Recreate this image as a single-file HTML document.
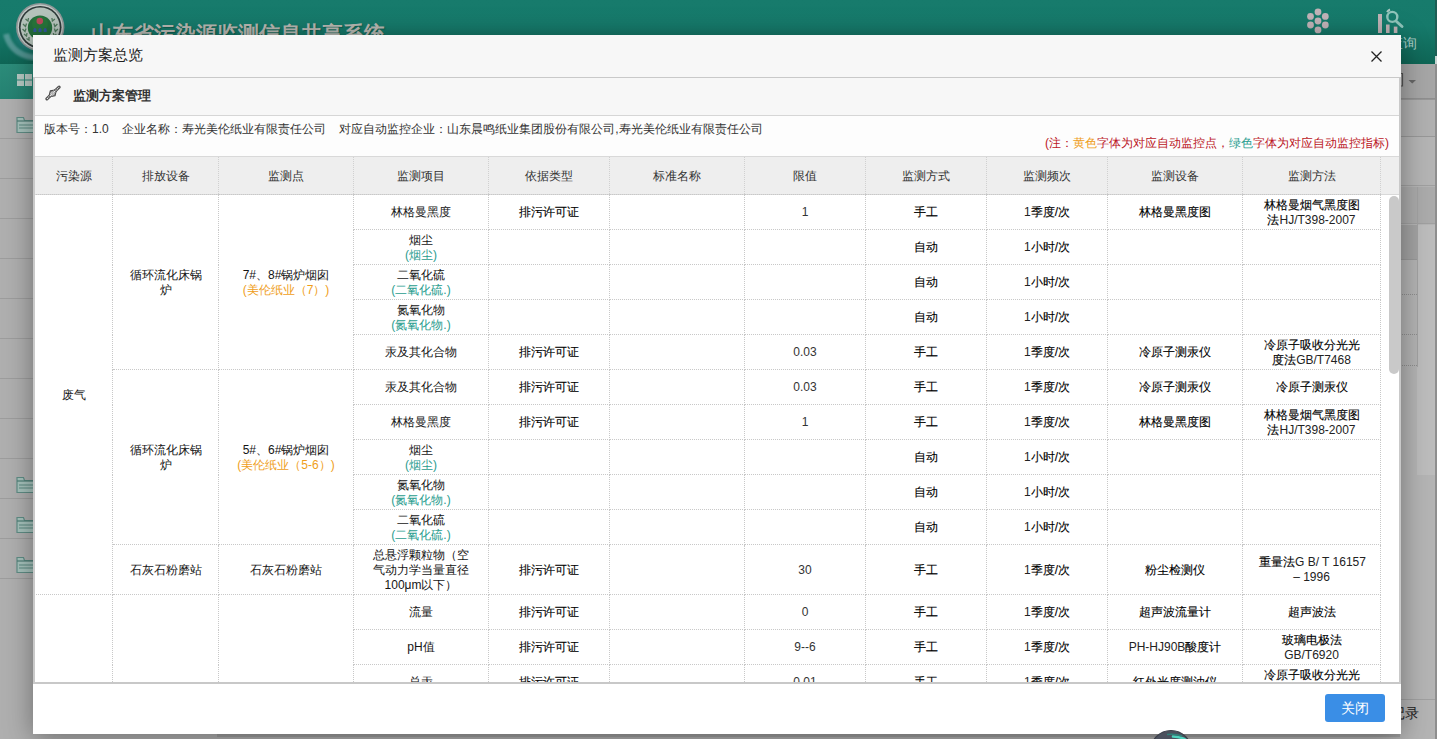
<!DOCTYPE html>
<html><head><meta charset="utf-8">
<style>
*{box-sizing:border-box;margin:0;padding:0}
html,body{width:1437px;height:739px;overflow:hidden}
body{position:relative;background:#afafaf;font-family:"Liberation Sans",sans-serif;font-size:12px;color:#222}
.abs{position:absolute}
/* background page */
#hdr{left:0;top:0;width:1437px;height:64px;background:linear-gradient(#177b6c 0%,#167a6b 40%,#0f6656 100%)}
#nav{left:0;top:64px;width:1437px;height:35px;background:#a6a6a6;border-bottom:1px solid #8f8f8f}
#navl{left:0;top:64px;width:40px;height:35px;background:linear-gradient(#2c8c7a,#258272)}
#htitle{left:91px;top:22px;font-size:21px;line-height:24px;font-weight:900;color:#b8b8b2;text-shadow:1px 1px 1px rgba(0,40,30,.35);white-space:nowrap}
#hq{left:1389px;top:35px;font-size:14px;line-height:16px;color:#a6cbc4;white-space:nowrap}
#side{left:0;top:99px;width:40px;height:640px;background:#afafaf}
.sl{position:absolute;left:0;width:40px;height:1px;background:#9d9d9d}
#rightbg{left:1400px;top:99px;width:37px;height:640px;background:#b4b4b4}
/* modal */
#modal{left:33px;top:35px;width:1368px;height:699px;background:#fff;box-shadow:0 4px 26px rgba(0,0,0,.38)}
#mtitle{left:0;top:0;width:1368px;height:43px;background:#f7f7f7;border-bottom:1px solid #c9c9c9}
#mtitle .t{position:absolute;left:20px;top:11px;font-size:15px;line-height:18px;color:#222}
#close{left:1338px;top:16px;width:11px;height:11px}
#mbody{left:0;top:43px;width:1368px;height:606px;border-left:2px solid #c9c9c9;border-right:2px solid #c9c9c9;border-bottom:2px solid #c8c8c8;overflow:hidden;background:#fff}
#ph{left:0;top:0;width:1364px;height:38px;background:#f7f7f7;border-bottom:1px solid #d6d6d6}
#ph .t{position:absolute;left:38px;top:10px;font-size:13px;font-weight:bold;line-height:16px;color:#333}
#ph svg{position:absolute;left:8px;top:5px}
#info{left:0;top:38px;width:1364px;height:40px;background:#fdfdfd}
#info .a{position:absolute;left:9px;top:6px;line-height:15px;white-space:pre;color:#333}
#info .n{position:absolute;right:10px;top:20px;line-height:15px;color:#bb1525;white-space:pre}
.y{color:#ef9e1a}.g{color:#2a9d8f}
table{border-collapse:collapse;table-layout:fixed;position:absolute;left:-1px;width:1365px}
td,th{text-align:center;vertical-align:middle;font-weight:normal;line-height:15px;border:1px dotted #c8c8c8;padding:1px 16px 0;overflow:hidden}
#thead{top:78px;background:#eeeeee}
#thead th{height:38px;color:#333;border-left:1px dotted #d0d0d0;border-right:1px dotted #d0d0d0;border-top:1px solid #d9d9d9;border-bottom:1px solid #d9d9d9}
#tbody{top:116px}
#tbody td{height:35px;color:#151515}
#tbody td.k{color:#000;-webkit-text-stroke:0.12px #000}
#tbody td.v{color:#333}
#tbody td.k .l{color:#222;-webkit-text-stroke:0}
#sb{left:1354px;top:118px;width:10px;height:178px;border-radius:5px;background:#c9c9c9}
#footer{left:0;top:649px;width:1368px;height:50px;background:#fff}
#btn{left:1292px;top:10px;width:60px;height:28px;background:#3a8ee6;border-radius:3px;color:#fff;font-size:14px;line-height:28px;text-align:center}
</style></head><body>
<div id="hdr" class="abs"></div>
<svg class="abs" style="left:0;top:0" width="90" height="64" viewBox="0 0 90 64">
  <path d="M6 34 Q12 57 40 58" fill="none" stroke="#9fc3cf" stroke-width="6" opacity=".45" filter="url(#bl)"/><circle cx="28" cy="38" r="12" fill="#3d8fa8" opacity=".35" filter="url(#bl2)"/><defs><filter id="bl2"><feGaussianBlur stdDeviation="3"/></filter></defs><defs><filter id="bl"><feGaussianBlur stdDeviation="1.2"/></filter></defs>
  <circle cx="40.2" cy="27.2" r="24.2" fill="#8f9797"/>
  <circle cx="40.2" cy="27.2" r="22.6" fill="#c2c8c6"/>
  <circle cx="40.2" cy="27.2" r="21.3" fill="#2e3a39"/>
  <circle cx="40.2" cy="27.2" r="19.6" fill="#b5c3bb"/>
  <g fill="none" stroke="#3f6a4c" stroke-width="1.3" opacity=".85">
    <path d="M23 24 l2.5 2.5 l1-3 M22.5 29 l2.5 2.5 l1-3 M24 34 l2.5 2 l0.5-3 M26.5 38.5 l2.5 1.5 l0-3 M25.5 19 l2.5 2 l0.5-3"/>
    <path d="M57.4 24 l-2.5 2.5 l-1-3 M57.9 29 l-2.5 2.5 l-1-3 M56.4 34 l-2.5 2 l-0.5-3 M53.9 38.5 l-2.5 1.5 l0-3 M54.9 19 l-2.5 2 l-0.5-3"/>
  </g>
  <circle cx="40" cy="27.7" r="12.2" fill="#236c3a"/>
  <circle cx="40" cy="24" r="8" fill="#2a7a3a" opacity=".6"/>
  <circle cx="39.8" cy="21.1" r="3.3" fill="#b94a5a"/>
  <path d="M33.4 32V29.6a1.5 1.5 0 0 1 3 0V32ZM38.5 32V29.6a1.5 1.5 0 0 1 3 0V32ZM43.7 32V29.6a1.5 1.5 0 0 1 3 0V32Z" fill="#30559a"/>
</svg>
<div class="abs" id="htitle">山东省污染源监测信息共享系统</div>
<svg class="abs" style="left:1300px;top:4px" width="36" height="34" viewBox="0 0 36 34"><g fill="#c1b3b8"><circle cx="18" cy="8" r="3.4"/><circle cx="10.5" cy="12.4" r="3.4"/><circle cx="25.3" cy="12.4" r="3.4"/><circle cx="18" cy="17" r="3.4"/><circle cx="10.5" cy="21" r="3.4"/><circle cx="25.3" cy="21" r="3.4"/><circle cx="18" cy="25.9" r="3.4"/></g></svg>
<svg class="abs" style="left:1370px;top:4px" width="40" height="32" viewBox="0 0 40 32"><g fill="#bfb2b5"><rect x="8" y="10" width="4" height="19"/><rect x="16" y="20.5" width="3.6" height="8.5"/><rect x="23.8" y="22.6" width="3.6" height="6.4"/></g><circle cx="22.3" cy="12.9" r="5" fill="none" stroke="#8fc4ba" stroke-width="2.4"/><path d="M26.5 17.5L32 22.5" stroke="#8fc4ba" stroke-width="3" stroke-linecap="round"/><path d="M17 8 A7 7 0 0 1 20 5.5" stroke="#a9c9c2" stroke-width="2" fill="none"/></svg>
<div class="abs" id="hq">查询</div>
<div class="abs" style="left:1435px;top:0;width:2px;height:56px;background:#1d5e54"></div><div class="abs" style="left:1435px;top:56px;width:2px;height:8px;background:#c9d4d2"></div>
<div id="nav" class="abs"></div>
<div id="navl" class="abs"><svg class="abs" style="left:17px;top:10px" width="16" height="13" viewBox="0 0 16 13"><g fill="#b7c9c4"><rect x="0" y="0" width="7" height="5.5"/><rect x="8" y="0" width="7" height="5.5"/><rect x="0" y="6.5" width="7" height="5.5"/><rect x="8" y="6.5" width="7" height="5.5"/></g></svg></div>
<svg class="abs" style="left:1396px;top:70px" width="24" height="20" viewBox="0 0 24 20"><path d="M3 3.5H6.5V16H4" fill="none" stroke="#555" stroke-width="1.2"/><path d="M12.5 10H20L16.25 13.5Z" fill="#666"/></svg>
<div id="side" class="abs"></div>
<div class="sl" style="top:138px"></div><div class="sl" style="top:178px"></div><div class="sl" style="top:218px"></div><div class="sl" style="top:258px"></div><div class="sl" style="top:298px"></div><div class="sl" style="top:338px"></div><div class="sl" style="top:378px"></div><div class="sl" style="top:418px"></div><div class="sl" style="top:458px"></div><div class="sl" style="top:498px"></div><div class="sl" style="top:538px"></div><div class="sl" style="top:578px"></div>
<svg class="abs fold" style="left:16px;top:116px" width="20" height="18" viewBox="0 0 20 18"><path d="M1 16.5V1.5H7.5L8.5 4.5H19V16.5Z" fill="#a6c2bc" stroke="#5f8d85" stroke-width="1.2"/><path d="M1 5H19" stroke="#4f7d75" stroke-width="1.2"/><path d="M3 9H18M3 12H18" stroke="#5d8a82" stroke-width="1"/></svg>
<svg class="abs fold" style="left:16px;top:476px" width="20" height="18" viewBox="0 0 20 18"><path d="M1 16.5V1.5H7.5L8.5 4.5H19V16.5Z" fill="#a6c2bc" stroke="#5f8d85" stroke-width="1.2"/><path d="M1 5H19" stroke="#4f7d75" stroke-width="1.2"/><path d="M3 9H18M3 12H18" stroke="#5d8a82" stroke-width="1"/></svg>
<svg class="abs fold" style="left:16px;top:516px" width="20" height="18" viewBox="0 0 20 18"><path d="M1 16.5V1.5H7.5L8.5 4.5H19V16.5Z" fill="#a6c2bc" stroke="#5f8d85" stroke-width="1.2"/><path d="M1 5H19" stroke="#4f7d75" stroke-width="1.2"/><path d="M3 9H18M3 12H18" stroke="#5d8a82" stroke-width="1"/></svg>
<svg class="abs fold" style="left:16px;top:556px" width="20" height="18" viewBox="0 0 20 18"><path d="M1 16.5V1.5H7.5L8.5 4.5H19V16.5Z" fill="#a6c2bc" stroke="#5f8d85" stroke-width="1.2"/><path d="M1 5H19" stroke="#4f7d75" stroke-width="1.2"/><path d="M3 9H18M3 12H18" stroke="#5d8a82" stroke-width="1"/></svg>
<div id="rightbg" class="abs">
  <div class="abs" style="left:0;top:0;width:37px;height:1px;background:#979797"></div>
  <div class="abs" style="left:0;top:1px;width:37px;height:37px;background:#b0b0b0;border-bottom:1px solid #989898"></div>
  <div class="abs" style="left:0;top:39px;width:37px;height:48px;background:#b4b4b4;border-bottom:1px solid #a0a0a0"></div>
  <div class="abs" style="left:0;top:88px;width:37px;height:37px;background:#ababab;border-bottom:1px solid #a0a0a0"></div>
  <div class="abs" style="left:0;top:126px;width:17px;height:35px;background:#a3a3a3;border-bottom:1px solid #999"></div>
  <div class="abs" style="left:17px;top:126px;width:20px;height:250px;background:#bcbcbc"></div>
  <div class="abs" style="left:17px;top:88px;width:1px;height:180px;background:#a2a2a2"></div>
  <div class="abs" style="left:0;top:195px;width:17px;height:1px;border-top:1px dotted #8e8e8e"></div>
  <div class="abs" style="left:0;top:235px;width:17px;height:1px;border-top:1px dotted #8e8e8e"></div>
  <div class="abs" style="left:0;top:266px;width:17px;height:1px;border-top:1px dotted #8e8e8e"></div>
  <div class="abs" style="left:35px;top:-35px;width:2px;height:675px;background:#8e8e8e"></div>
  <div class="abs" style="left:0;top:600px;width:35px;height:1px;background:#a0a0a0"></div>
  <div class="abs" style="left:0;top:606px;font-size:14px;line-height:16px;color:#222;white-space:nowrap;margin-left:-9px">记录</div>
</div>
</div>

<div class="abs" style="left:217px;top:734px;width:1183px;height:3px;background:rgba(0,0,0,.1)"></div>
<div id="modal" class="abs">
  <div id="mtitle" class="abs"><div class="t">监测方案总览</div>
    <svg id="close" class="abs" viewBox="0 0 11 11"><path d="M0.5 0.5L10.5 10.5M10.5 0.5L0.5 10.5" stroke="#222" stroke-width="1.3"/></svg>
  </div>
  <div id="mbody" class="abs">
    <div id="ph" class="abs">
      <svg width="20" height="20" viewBox="0 0 20 20"><g transform="rotate(-44 10 10)"><path d="M1.5 10H18.5" stroke="#505050" stroke-width="3.2" stroke-linecap="round"/><path d="M4.2 10L9.5 6.6L14.8 10L9.5 13.4Z" fill="#9a9a9a" stroke="#474747" stroke-width="1.1" stroke-linejoin="round"/><path d="M1.6 10H18.4" stroke="#f4f4f4" stroke-width="1.1" stroke-dasharray="1.2 0.8"/><path d="M7 8.7H12M7 11.3H12" stroke="#e6e6e6" stroke-width="0.8" stroke-dasharray="1 1"/></g></svg>
      <div class="t">监测方案管理</div>
    </div>
    <div id="info" class="abs">
      <div class="a">版本号：1.0    企业名称：寿光美伦纸业有限责任公司    对应自动监控企业：山东晨鸣纸业集团股份有限公司,寿光美伦纸业有限责任公司</div>
      <div class="n">(注：<span class="y">黄色</span>字体为对应自动监控点，<span class="g">绿色</span>字体为对应自动监控指标)</div>
    </div>
    <table id="thead">
      <colgroup><col style="width:78px"><col style="width:106px"><col style="width:135px"><col style="width:135px"><col style="width:121px"><col style="width:135px"><col style="width:121px"><col style="width:121px"><col style="width:121px"><col style="width:135px"><col style="width:138px"><col style="width:19px"></colgroup>
      <tr><th>污染源</th><th>排放设备</th><th>监测点</th><th>监测项目</th><th>依据类型</th><th>标准名称</th><th>限值</th><th>监测方式</th><th>监测频次</th><th>监测设备</th><th>监测方法</th><th></th></tr>
    </table>
    <table id="tbody">
      <colgroup><col style="width:78px"><col style="width:106px"><col style="width:135px"><col style="width:135px"><col style="width:121px"><col style="width:135px"><col style="width:121px"><col style="width:121px"><col style="width:121px"><col style="width:135px"><col style="width:138px"><col style="width:19px"></colgroup>
      <tr><td rowspan="11">废气</td><td rowspan="5">循环流化床锅炉</td><td rowspan="5">7#、8#锅炉烟囱<br><span class="y">(美伦纸业（7）)</span></td><td>林格曼黑度</td><td class="k">排污许可证</td><td></td><td class="v">1</td><td class="k">手工</td><td class="k"><span class="l">1</span>季度/次</td><td class="k">林格曼黑度图</td><td class="k">林格曼烟气黑度图法<span class="l">HJ/T398-2007</span></td></tr>
      <tr><td>烟尘<br><span class="g">(烟尘)</span></td><td class="k"></td><td></td><td class="v"></td><td class="k">自动</td><td class="k"><span class="l">1</span>小时/次</td><td class="k"></td><td class="k"></td></tr>
      <tr><td>二氧化硫<br><span class="g">(二氧化硫.)</span></td><td class="k"></td><td></td><td class="v"></td><td class="k">自动</td><td class="k"><span class="l">1</span>小时/次</td><td class="k"></td><td class="k"></td></tr>
      <tr><td>氮氧化物<br><span class="g">(氮氧化物.)</span></td><td class="k"></td><td></td><td class="v"></td><td class="k">自动</td><td class="k"><span class="l">1</span>小时/次</td><td class="k"></td><td class="k"></td></tr>
      <tr><td>汞及其化合物</td><td class="k">排污许可证</td><td></td><td class="v">0.03</td><td class="k">手工</td><td class="k"><span class="l">1</span>季度/次</td><td class="k">冷原子测汞仪</td><td class="k">冷原子吸收分光光度法<span class="l">GB/T7468</span></td></tr>
      <tr><td rowspan="5">循环流化床锅炉</td><td rowspan="5">5#、6#锅炉烟囱<br><span class="y">(美伦纸业（5-6）)</span></td><td>汞及其化合物</td><td class="k">排污许可证</td><td></td><td class="v">0.03</td><td class="k">手工</td><td class="k"><span class="l">1</span>季度/次</td><td class="k">冷原子测汞仪</td><td class="k">冷原子测汞仪</td></tr>
      <tr><td>林格曼黑度</td><td class="k">排污许可证</td><td></td><td class="v">1</td><td class="k">手工</td><td class="k"><span class="l">1</span>季度/次</td><td class="k">林格曼黑度图</td><td class="k">林格曼烟气黑度图法<span class="l">HJ/T398-2007</span></td></tr>
      <tr><td>烟尘<br><span class="g">(烟尘)</span></td><td class="k"></td><td></td><td class="v"></td><td class="k">自动</td><td class="k"><span class="l">1</span>小时/次</td><td class="k"></td><td class="k"></td></tr>
      <tr><td>氮氧化物<br><span class="g">(氮氧化物.)</span></td><td class="k"></td><td></td><td class="v"></td><td class="k">自动</td><td class="k"><span class="l">1</span>小时/次</td><td class="k"></td><td class="k"></td></tr>
      <tr><td>二氧化硫<br><span class="g">(二氧化硫.)</span></td><td class="k"></td><td></td><td class="v"></td><td class="k">自动</td><td class="k"><span class="l">1</span>小时/次</td><td class="k"></td><td class="k"></td></tr>
      <tr><td style="height:50px">石灰石粉磨站</td><td>石灰石粉磨站</td><td>总悬浮颗粒物（空气动力学当量直径100μm以下）</td><td class="k">排污许可证</td><td></td><td class="v">30</td><td class="k">手工</td><td class="k"><span class="l">1</span>季度/次</td><td class="k">粉尘检测仪</td><td class="k" style="white-space:nowrap">重量法<span class="l">G B/ T 16157</span><br><span class="l">– 1996</span></td></tr>
      <tr><td rowspan="3"></td><td rowspan="3"></td><td rowspan="3"></td><td>流量</td><td class="k">排污许可证</td><td></td><td class="v">0</td><td class="k">手工</td><td class="k"><span class="l">1</span>季度/次</td><td class="k">超声波流量计</td><td class="k">超声波法</td></tr>
      <tr><td>pH值</td><td class="k">排污许可证</td><td></td><td class="v">9--6</td><td class="k">手工</td><td class="k"><span class="l">1</span>季度/次</td><td class="k"><span class="l">PH-HJ90B</span>酸度计</td><td class="k">玻璃电极法<span class="l">GB/T6920</span></td></tr>
      <tr><td>总汞</td><td class="k">排污许可证</td><td></td><td class="v">0.01</td><td class="k">手工</td><td class="k"><span class="l">1</span>季度/次</td><td class="k">红外光度测油仪</td><td class="k">冷原子吸收分光光度法<span class="l">GB/T7468</span></td></tr>
    </table>
    <div id="sb" class="abs"></div>
  </div>
  <div id="footer" class="abs"><div id="btn" class="abs">关闭</div></div>
</div>
<svg class="abs" style="left:1149px;top:729px" width="44" height="10" viewBox="0 0 44 10"><circle cx="22" cy="22" r="20.5" fill="#4b505d" stroke="#3a3e48" stroke-width="1.2"/><path d="M24 7.5 Q33 8 37 11" fill="none" stroke="#4fd3bd" stroke-width="2.6" stroke-linecap="round"/><path d="M18 5.5 Q26 4.5 33 7" fill="none" stroke="#2f7f78" stroke-width="1.5"/></svg>
</body></html>
